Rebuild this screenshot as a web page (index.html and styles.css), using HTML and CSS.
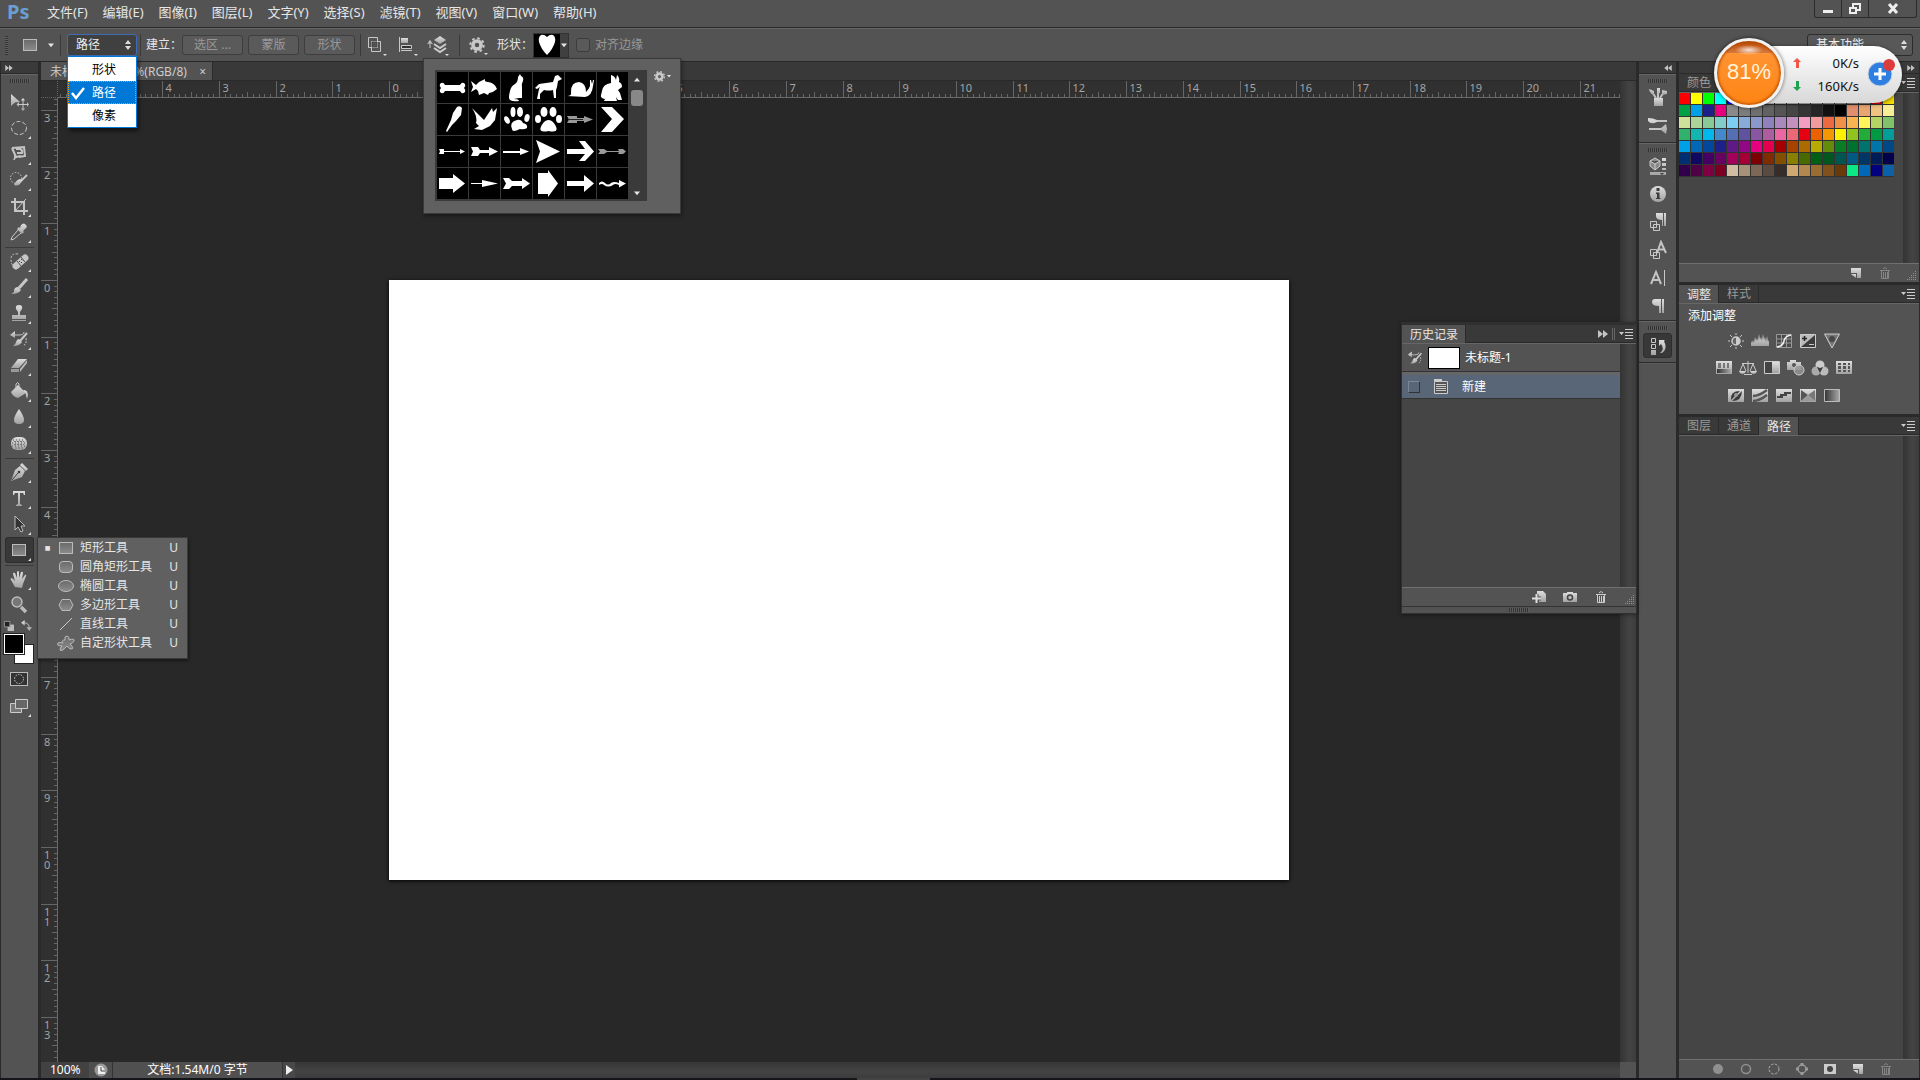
FILE: index.html
```html
<!DOCTYPE html>
<html lang="zh-CN">
<head>
<meta charset="utf-8">
<title>Photoshop</title>
<link rel="stylesheet" href="styles.css">
</head>
<body>
<svg class="sprite" aria-hidden="true">
  <defs>
    <linearGradient id="metal" x1="0" y1="0" x2="0" y2="1"><stop offset="0" stop-color="#dedede"/><stop offset="1" stop-color="#a2a2a2"/></linearGradient>
    <linearGradient id="dull" x1="0" y1="0" x2="0" y2="1"><stop offset="0" stop-color="#6a6a6a"/><stop offset="1" stop-color="#8c8c8c"/></linearGradient>
    <linearGradient id="fade" x1="0" y1="0" x2="1" y2="0"><stop offset="0" stop-color="#333"/><stop offset="1" stop-color="#aaa"/></linearGradient>
  </defs>
  <symbol id="move" viewBox="0 0 20 20"><path class="f" d="M2 2l9 8-5 .5L2 14z"/><path class="s" d="M14 8v9M9.500 12.500h9"/><path class="f" d="M14 6l2.200 2.500h-4.400zM14 19l2.200-2.500h-4.400zM7.500 12.500l2.500-2.200v4.400zM20 12.500l-2-2.200v4.400z"/></symbol>
  <symbol id="ellsel" viewBox="0 0 20 20"><ellipse class="s" cx="10" cy="10" rx="7.500" ry="6.500" stroke-dasharray="4 2"/></symbol>
  <symbol id="lasso" viewBox="0 0 20 20"><path class="s2" d="M3 4l12-1 1 9-6 1M3 4l4 9 5-1"/><path class="s" d="M7 13l-2 3 1-6"/><path class="s2" d="M7 5h4q3 1 2 4H8"/></symbol>
  <symbol id="quick" viewBox="0 0 20 20"><circle class="s" cx="7" cy="8" r="5.500" stroke-dasharray="1.500 1.500"/><path class="s2" d="M18 5l-6 6"/><path class="f" d="M13 10l-2-1q-4 1-6 6 5 2 8-4z"/></symbol>
  <symbol id="crop" viewBox="0 0 20 20"><path class="s2" d="M2 6h13v13M6 2v13h13"/><path class="s" d="M17 3L6 15"/></symbol>
  <symbol id="dropper" viewBox="0 0 20 20"><path class="f" d="M12 3q3-3 5 0 2 2-1 4l-2 2 1 1-2 2-5-5 2-2 1 1z"/><path class="s" d="M9 8l-6 7-1 3 3-1 7-6"/></symbol>
  <symbol id="heal" viewBox="0 0 20 20"><path class="s" d="M9 3q-7-1-7 5t3 7" stroke-dasharray="2 1.500"/><path d="M7 15l9-8" stroke="#c6c6c6" stroke-width="7" stroke-linecap="round"/><path class="d" d="M10 10h1v1h-1zM12 11h1v1h-1zM12 8h1v1h-1zM14 9h1v1h-1z"/><path d="M8 10l4 5M12 6l4 5" stroke="#555"/></symbol>
  <symbol id="brush" viewBox="0 0 20 20"><path d="M18 2L10 11" stroke="#c8c8c8" stroke-width="3"/><path class="f" d="M9 10l3 3q-2 4-10 4 4-2 3-4 1-3 4-3z"/></symbol>
  <symbol id="stamp" viewBox="0 0 20 20"><path class="f" d="M10 2q4 0 3 4l-2 3v3h6v4H3v-4h6V9L7 6q-1-4 3-4zM3 17h14v1H3z"/></symbol>
  <symbol id="hist" viewBox="0 0 20 20"><path class="s" d="M3 6h7q5 0 5-3"/><path class="f" d="M1 6l5-4v7z"/><path d="M18 4l-7 8" stroke="#c8c8c8" stroke-width="2"/><path class="f" d="M10 10l3 3q-2 4-9 4 3-2 3-4 1-3 3-3z"/><path class="s" d="M17 9q1 6-3 8" stroke-dasharray="2 1"/></symbol>
  <symbol id="eraser" viewBox="0 0 20 20"><path class="f" d="M9 4h9l-8 9H2z"/><path fill="#999" d="M2 14h8v3H2z"/><path fill="#bbb" d="M18 5v3l-7 9v-3z"/></symbol>
  <symbol id="bucket" viewBox="0 0 20 20"><path class="f" d="M9 4l8 8-8 5q-5-1-7-6z"/><path class="s" d="M7 9V3q2-3 3 0v5"/><path class="f" d="M15 9q4 0 4 6l-1 3-1-3q0-4-3-5z"/></symbol>
  <symbol id="drop" viewBox="0 0 20 20"><path class="f" d="M10 2q5 7 5 11 0 4-5 4t-5-4q0-4 5-11z"/></symbol>
  <symbol id="sponge" viewBox="0 0 20 20"><rect class="f" x="2" y="4" width="16" height="13" rx="6"/><path d="M4 7h12M3 10h14M3 13h14" stroke="#555" stroke-dasharray="1 2"/><path d="M5 8.500h10M5 11.500h10M6 15h8" stroke="#777" stroke-dasharray="2 1"/></symbol>
  <symbol id="pen" viewBox="0 0 20 20"><path class="f" d="M13 1l6 6-2 2-6-6zM11 4l5 5-3 6-11 4 4-11z"/><path class="k" d="M3 18l6-7"/><circle class="d" cx="10" cy="10" r="1.300"/></symbol>
  <symbol id="type" viewBox="0 0 20 20"><path class="f" d="M4 3h12v4h-1l-1-2h-3v11l2 1v1H7v-1l2-1V5H6L5 7H4z"/></symbol>
  <symbol id="select" viewBox="0 0 20 20"><path d="M6 2v14l3-3 3 5 2-1-2-5h4z" fill="#333" stroke="#bbb"/></symbol>
  <symbol id="rect" viewBox="0 0 20 20"><rect x="3.500" y="4.500" width="13" height="11" fill="url(#dull)" stroke="#bbb"/></symbol>
  <symbol id="rrect" viewBox="0 0 20 20"><rect x="3.500" y="4.500" width="13" height="11" rx="3.500" fill="url(#dull)" stroke="#bbb"/></symbol>
  <symbol id="ellipse" viewBox="0 0 20 20"><ellipse cx="10" cy="10" rx="7.500" ry="5.500" fill="url(#dull)" stroke="#bbb"/></symbol>
  <symbol id="poly" viewBox="0 0 20 20"><path d="M6 4.500h8l3 5.500-3 5.500H6L3 10z" fill="url(#dull)" stroke="#bbb"/></symbol>
  <symbol id="line" viewBox="0 0 20 20"><path class="s" d="M4 16L16 4"/></symbol>
  <symbol id="blob" viewBox="0 0 20 20"><path d="M9 7q-1-4 2-4 3 1 2 4 6-2 5 1-1 2-4 3 5 5 1 5-2 0-4-3-5 6-7 4 0-2 2-4-6 0-4-3 2-1 5 0-2-3 2-3z" fill="url(#dull)" stroke="#bbb"/></symbol>
  <symbol id="hand" viewBox="0 0 20 20"><path class="f" d="M6 18L2 11q-1-2 1-2l3 3L4 5q0-2 2-1l2 5V3q1-2 2 0v6l2-6q2-1 2 1l-1 6 3-4q2-1 1 1l-3 8-1 4z"/></symbol>
  <symbol id="zoom" viewBox="0 0 20 20"><circle cx="8" cy="7" r="5" fill="#777" stroke="#bbb" stroke-width="1.500"/><path d="M12 12l5 5" stroke="#bbb" stroke-width="3.500"/></symbol>
  <symbol id="mini" viewBox="0 0 12 12"><path fill="#bbb" d="M5 5h7v7H5z"/><path d="M1.500 1.500h6v6h-6z" fill="#222" stroke="#999"/></symbol>
  <symbol id="swap" viewBox="0 0 12 12"><path class="s" d="M3 3q6 0 6 6"/><path class="f" d="M0 3l4-3v6zM9 12L6 8h6z"/></symbol>
  <symbol id="mask" viewBox="0 0 20 20"><rect x="1.500" y="3.500" width="17" height="13" fill="#333" stroke="#bbb"/><circle class="s" cx="10" cy="10" r="4.500" stroke-dasharray="1.500 1.300"/></symbol>
  <symbol id="screen" viewBox="0 0 20 20"><path d="M1.500 7.500h11v9h-11z" fill="#777" stroke="#ccc"/><path d="M6.500 3.500h12v9h-12z" fill="#666" stroke="#ccc"/></symbol>
  <symbol id="combine" viewBox="0 0 20 20"><path class="s" d="M3.500 2.500h9v10h-9z"/><path class="s" d="M6.500 6.500h9v10h-9z"/><path class="k" d="M7 7h5v5H7z"/></symbol>
  <symbol id="align" viewBox="0 0 20 20"><path class="s" d="M3.500 2v15M5 15.500h11"/><path class="f" d="M5 3h7v5H5z"/><path d="M5.500 10.500h10v3h-10z" fill="#333" stroke="#ccc"/></symbol>
  <symbol id="stack" viewBox="0 0 20 20"><path class="f" d="M13 1l6 4-6 4-6-4z"/><path d="M7 9l6 4 6-4M7 13l6 4 6-4" fill="none" stroke="#ccc" stroke-width="2"/><path class="s" d="M3 13V7"/><path class="f" d="M0 9l3-4 3 4z"/></symbol>
  <symbol id="gear" viewBox="0 0 20 20"><circle cx="10" cy="10" r="4.500" fill="none" stroke="#c8c8c8" stroke-width="4"/><circle cx="10" cy="10" r="7.500" fill="none" stroke="#c8c8c8" stroke-width="2.200" stroke-dasharray="2.900 3"/></symbol>
  <symbol id="down" viewBox="0 0 8 8"><path fill="#e4e4e4" d="M0 2h8L4 7z"/></symbol>
  <symbol id="updown" viewBox="0 0 8 12"><path fill="#ddd" d="M1 5h6L4 1zM1 7h6l-3 4z"/></symbol>
  <symbol id="ff" viewBox="0 0 10 8"><path fill="#c4c4c4" d="M0 0l5 4-5 4zM5 0l5 4-5 4z"/></symbol>
  <symbol id="rew" viewBox="0 0 10 8"><path fill="#c4c4c4" d="M5 0L0 4l5 4zM10 0L5 4l5 4z"/></symbol>
  <symbol id="menu" viewBox="0 0 14 10"><path fill="#ccc" d="M0 3h5L2.500 6zM6 0h8v1H6zM6 3h8v1H6zM6 6h8v1H6zM6 9h8v1H6z"/></symbol>
  <symbol id="new" viewBox="0 0 14 14"><path class="f" d="M2 2h10v10H8V7H2z"/><path class="f" d="M2 8h5v4z"/></symbol>
  <symbol id="trash" viewBox="0 0 14 14"><path d="M2 4.500h10M5 3q2-3 4 0M3.500 5v7.500h7V5M5.500 6v6M7.500 6v6M9.500 6v6" fill="none" stroke="currentColor"/></symbol>
  <symbol id="camera" viewBox="0 0 14 14"><path class="f" d="M0 3h4V2h6v1h4v9H0z"/><circle cx="7" cy="7.500" r="2.500" fill="#bbb" stroke="#444" stroke-width="1.500"/></symbol>
  <symbol id="newdoc" viewBox="0 0 14 14"><path class="f" d="M5 1h6l3 3v8H7V8H5z"/><path d="M4.500 4v9M0 8.500h9" stroke="#555" stroke-width="4"/><path d="M4.500 4v9M0 8.500h9" stroke="#ddd" stroke-width="2"/></symbol>
  <symbol id="resize" viewBox="0 0 10 10"><path fill="#909090" d="M8 0h1v1H8zM6 2h1v1H6zM8 2h1v1H8zM4 4h1v1H4zM6 4h1v1H6zM8 4h1v1H8zM2 6h1v1H2zM4 6h1v1H4zM6 6h1v1H6zM8 6h1v1H8zM0 8h1v1H0zM2 8h1v1H2zM4 8h1v1H4zM6 8h1v1H6zM8 8h1v1H8z"/></symbol>
  <symbol id="cup" viewBox="0 0 20 20"><path class="f" d="M6 11h9v8H6z"/><path class="s2" d="M8 11L4 5M10 11V4M12 11l4-6"/><path class="f" d="M1 2l5 2v4q-4-1-5-6zM9 1h3v5H9zM14 3l5 1v3l-5 1z"/></symbol>
  <symbol id="presets" viewBox="0 0 20 20"><path class="s2" d="M8 6h11M1 14h12"/><path class="f" d="M0 3q5 0 9 2v2q-6 3-9-1zM13 13l5-4 1 5-1 5-5-4z"/></symbol>
  <symbol id="cube" viewBox="0 0 20 20"><path d="M7 2l5 3v5l-5 4-5-4V5zM2 5l5 3 5-3M7 8v6" fill="#888" stroke="#ccc"/><path class="f" d="M14 2h4v3h-4zM14 7h4v3h-4zM14 12h4v2h-4zM2 16h16v3H2z"/><path class="d" d="M12 17h4l-2 2z"/></symbol>
  <symbol id="info" viewBox="0 0 20 20"><circle class="f" cx="10" cy="10" r="8"/><path class="d" d="M8.500 4h3v3h-3zM8 8.500h3.500V14h1v1H8v-1h1v-4H8z"/></symbol>
  <symbol id="pstyle" viewBox="0 0 20 20"><path class="f" d="M16 1h2v13h-2zM8 1h7v13h-1V8q-6 0-6-4z"/><path class="s" d="M2.500 9.500h6v6h-6zM5.500 12.500h6v6h-6z"/></symbol>
  <symbol id="cstyle" viewBox="0 0 20 20"><path class="s2" d="M9 13l4-11 5 11M10.500 9.500h6"/><path class="s" d="M2.500 9.500h6v6h-6zM5.500 12.500h6v6h-6z"/></symbol>
  <symbol id="char" viewBox="0 0 20 20"><path class="s2" d="M3 16L8 4l5 12M5 12h6"/><path class="s" d="M16.500 2v16"/></symbol>
  <symbol id="para" viewBox="0 0 20 20"><path class="f" d="M14 3h2v14h-2zM7 3h6v14h-2v-7q-7 0-7-4 0-3 3-3z"/></symbol>
  <symbol id="histpan" viewBox="0 0 20 20"><path class="s" d="M3.500 2.500h4v4h-4zM3.500 8.500h4v4h-4z"/><path class="f" d="M3 14h5v5H3zM11 4h6l-1 1q4 8-2 12-1 0-2 0 5-4 1-9l-2 2z"/></symbol>
  <symbol id="a1" viewBox="0 0 18 16"><circle cx="9" cy="8" r="4" fill="#666" stroke="#ccc" stroke-width="1.500"/><path fill="#ccc" d="M9 4a4 4 0 010 8z"/><path class="s" d="M9 0v2M9 14v2M1 8h2M15 8h2M3 2l2 2M13 12l2 2M3 14l2-2M13 4l2-2"/></symbol>
  <symbol id="a2" viewBox="0 0 18 16"><path class="f" d="M0 13V8l1 2 1-3 1 3 1-6 1 4 1-3 1 3 1-7 1 6 1-3 1 4 1-7 1 6 1-3 1 5 1-6 1 6 1-2v6z"/></symbol>
  <symbol id="a3" viewBox="0 0 18 16"><path d="M1.500 1.500h15v13h-15zM6.500 1v13M11.500 1v13M1 6h15M1 10h15" stroke="#999" fill="#4a4a4a"/><path d="M2 14Q8 13 9 8t7-6" stroke="#eee" stroke-width="1.500" fill="none"/></symbol>
  <symbol id="a4" viewBox="0 0 18 16"><path d="M1.500 1.500h15v13h-15z" fill="#bbb" stroke="#ccc"/><path class="d" d="M2 14L16 2v12z"/><path d="M5.500 3v5M3 5.500h5" stroke="#222" stroke-width="1.500"/><path class="s" d="M10 11.500h5"/></symbol>
  <symbol id="a5" viewBox="0 0 18 16"><path d="M1.500 1h15L9 15z" fill="#777" stroke="#ccc"/><circle cx="9" cy="6" r="3" fill="#484848"/></symbol>
  <symbol id="b1" viewBox="0 0 18 16"><path class="f" d="M1 1h16v13H1z"/><path fill="url(#fade)" d="M2 9h14v4H2z"/><path fill="#777" d="M3 3h3v5H3zM8 3h2v5H8zM12 3h2v5h-2z"/></symbol>
  <symbol id="b2" viewBox="0 0 18 16"><path class="s" d="M9 1v12M3 3.500h12M5 14.500h8M4 4l-3 7M4 4l3 7M14 4l-3 7M14 4l3 7"/><path class="f" d="M0 11h7q-1 3-3.500 3T0 11zM11 11h7q-1 3-3.500 3T11 11z"/></symbol>
  <symbol id="b3" viewBox="0 0 18 16"><path d="M1.500 1.500h15v12h-15z" fill="#444" stroke="#ccc"/><path class="f" d="M9 2h7v11H9z"/></symbol>
  <symbol id="b4" viewBox="0 0 18 16"><path class="f" d="M0 2h3V0h6v2h5v8H0z"/><circle cx="7" cy="5" r="2" fill="#555"/><circle cx="12" cy="10" r="5" fill="#999" fill-opacity=".8" stroke="#ccc"/></symbol>
  <symbol id="b5" viewBox="0 0 18 16"><circle cx="9" cy="5" r="4.500" fill="#ccc"/><circle cx="5" cy="11" r="4.500" fill="#aaa"/><circle cx="13" cy="11" r="4.500" fill="#bbb"/><path class="d" d="M6 7l3 1 3-1-3 6z"/></symbol>
  <symbol id="b6" viewBox="0 0 18 16"><path class="f" d="M1 1h16v13H1z"/><path fill="#555" d="M3 3h3v2H3zM8 3h3v2H8zM13 3h2v2h-2zM3 6h3v3H3zM8 6h3v3H8zM13 6h2v3h-2zM3 10h3v2H3zM8 10h3v2H8zM13 10h2v2h-2z"/></symbol>
  <symbol id="c1" viewBox="0 0 18 16"><path class="f" d="M1 2h16v13H1z"/><path class="d" d="M4 13q-1-9 9-9L4 13zM5 14L15 4q0 10-10 10z"/><circle cx="9" cy="8" r="2" fill="#999"/></symbol>
  <symbol id="c2" viewBox="0 0 18 16"><path class="f" d="M1 2h16v13H1z"/><path d="M2 9q6 0 14-6M2 14q6 0 14-6" stroke="#555" stroke-width="2.500" fill="none"/></symbol>
  <symbol id="c3" viewBox="0 0 18 16"><path class="f" d="M1 2h16v13H1z"/><path fill="#444" d="M2 9h3V7h4V5h7v2h-4v2H8v2H2z"/></symbol>
  <symbol id="c4" viewBox="0 0 18 16"><path class="f" d="M1 2h16v13H1z"/><path fill="#555" d="M2 3l7 5-7 6z"/><path fill="#777" d="M16 3L9 8l7 6z"/><path fill="#999" d="M2 14l7-6 7 6z"/></symbol>
  <symbol id="c5" viewBox="0 0 18 16"><path d="M1.500 2.500h15v12h-15z" fill="url(#fade)" stroke="#bbb"/></symbol>
</svg>

<header class="menubar">
  <span class="logo">Ps</span>
  <nav class="menus"><button>文件(F)</button><button>编辑(E)</button><button>图像(I)</button><button>图层(L)</button><button>文字(Y)</button><button>选择(S)</button><button>滤镜(T)</button><button>视图(V)</button><button>窗口(W)</button><button>帮助(H)</button></nav>
  <div class="winbtns">
    <button aria-label="最小化"><svg width="12" height="12" viewBox="0 0 12 12"><path fill="#eee" d="M1 7h10v3H1z"/></svg></button>
    <button aria-label="还原"><svg width="12" height="12" viewBox="0 0 12 12"><path d="M4 4V1h7v6H8M1 5h6v5H1z" fill="none" stroke="#eee" stroke-width="2"/></svg></button>
    <button aria-label="关闭" class="wide"><svg width="12" height="12" viewBox="0 0 12 12"><path d="M2 1l8 9M10 1l-8 9" stroke="#eee" stroke-width="3"/></svg></button>
  </div>
</header>

<section class="options">
  <i class="grip-v"></i>
  <button class="ico shape-preset" aria-label="矩形工具"><svg width="20" height="20"><use href="#rect"/></svg><svg width="6" height="6"><use href="#down"/></svg></button>
  <i class="vsep"></i>
  <div class="mode">
    <select class="sel" aria-label="工具模式"><option>路径</option></select>
    <svg class="selarrow" width="8" height="12"><use href="#updown"/></svg>
    <div class="modelist" role="listbox">
      <button role="option">形状</button>
      <button role="option" class="on"><svg width="14" height="14" viewBox="0 0 14 14"><path d="M1 7l4 5 8-10" fill="none" stroke="#fff" stroke-width="2.500"/></svg>路径</button>
      <button role="option">像素</button>
    </div>
  </div>
  <i class="vsep"></i>
  <span class="lbl">建立：</span>
  <div class="makes"><button class="btn btn-wide" disabled>选区 ...</button><button class="btn" disabled>蒙版</button><button class="btn" disabled>形状</button></div>
  <i class="vsep"></i>
  <div class="ops">
    <button class="ico flag" aria-label="路径操作"><svg width="20" height="20"><use href="#combine"/></svg></button>
    <button class="ico flag" aria-label="路径对齐方式"><svg width="20" height="20"><use href="#align"/></svg></button>
    <button class="ico flag" aria-label="路径排列方式"><svg width="20" height="20"><use href="#stack"/></svg></button>
  </div>
  <i class="vsep"></i>
  <button class="ico flag gearbtn" aria-label="设置"><svg width="18" height="18"><use href="#gear"/></svg></button>
  <span class="lbl">形状：</span>
  <div class="heartwrap">
    <button class="heart" aria-label="形状"><svg width="26" height="22" viewBox="0 0 26 22"><path fill="#fff" d="M13 3q3-3 6-2 3 2 2 7-2 7-8 13Q7 15 5 8 4 3 7 1q3-1 6 2z"/></svg><span class="heartdrop"><svg width="6" height="6"><use href="#down"/></svg></span></button>
    <div class="picker">
      <div class="pickbox">
        <div class="shapes">
          <button><svg viewBox="0 0 31 31"><path d="M3 12q3-3 5 1h15q2-4 5-1 1 2-1 4 2 2 1 4-3 3-5-1H8q-2 4-5 1-1-2 1-4-2-2-1-4z"/></svg></button>
          <button><svg viewBox="0 0 31 31"><path d="M2 9l5 4 3-3 6-3q-1 3 3 3 7 1 9 7-3 3-8 4l-1 2-4-2-5 2-1-4-2-2-5 3 2-5z"/></svg></button>
          <button><svg viewBox="0 0 31 31"><path d="M17 5l2-3 1 2q3 1 2 5-2 3-1 7v10h-3l-5 1q5 0 5 2-6 1-9-1-2-2 0-9 1-5 5-7 3-2 3-7z"/></svg></button>
          <button><svg viewBox="0 0 31 31"><path d="M29 7l-4 2-1 6-1 3v8h-2l-1-8q-4 1-9 0l-4 4v5H4l2-10 1-2-3 2-2-1 4-4 14-2 2-6 3-1z"/></svg></button>
          <button><svg viewBox="0 0 31 31"><path d="M2 24q5 0 4-4 0-10 8-10 7 1 7 10 3-3 4-6V8h1l1 4 1-4h1l-1 6q-1 10-8 11z"/></svg></button>
          <button><svg viewBox="0 0 31 31"><path d="M14 3q4 1 5 5l1-5q3 3 2 7 3 1 3 5l-4 3 2 3 2 7h-4l-2-3 1 4H7l1-2q-5-1-4-4l1-4q1-7 9-8 0-4 0-8z"/></svg></button>
          <button><svg viewBox="0 0 31 31"><path d="M20 3q3-2 5 1l-1 7-5 6-4 4-5 7-1-1 5-11 2-7z"/></svg></button>
          <button><svg viewBox="0 0 31 31"><path d="M3 4l12 12 8-12 1 4 4-4-2 12-5 6-8 4-8-1 5-3-3-3q2-6-4-15z"/></svg></button>
          <button><svg viewBox="0 0 31 31"><ellipse cx="12" cy="8" rx="2.500" ry="5"/><ellipse cx="19" cy="8" rx="3" ry="5"/><ellipse cx="6" cy="16" rx="2.500" ry="4" transform="rotate(-25 6 16)"/><ellipse cx="26" cy="14" rx="2.500" ry="4" transform="rotate(15 26 14)"/><path d="M16 16q4-1 6 3 5 1 4 5-3 2-7 1-8 4-8 0-3-7 5-9z"/></svg></button>
          <button><svg viewBox="0 0 31 31"><ellipse cx="11" cy="8" rx="3.500" ry="5"/><ellipse cx="20" cy="8" rx="3.500" ry="5"/><ellipse cx="5" cy="15" rx="3" ry="4"/><ellipse cx="26" cy="15" rx="3" ry="4"/><path d="M15.500 16q5 0 8 8 1 5-8 3-9 2-8-3 3-8 8-8z"/></svg></button>
          <button><svg viewBox="0 0 31 31"><path fill="#999" d="M2 12h10v2h7v-2l9 3.500-9 3.500v-2h-7v2H2l2-3.500z"/><path stroke="#222" d="M3 15.500h15"/></svg></button>
          <button><svg viewBox="0 0 31 31"><path d="M4 3h11l12 12-12 13H4l11-13z"/></svg></button>
          <button><svg viewBox="0 0 31 31"><path d="M2 13h5v2h16v-2l5 2.500-5 2.500v-2H7v2H2l1-2.500z"/></svg></button>
          <button><svg viewBox="0 0 31 31"><path d="M2 11h7l2 3h9v-3l9 4.500-9 4.500v-3h-9l-2 3H2l2-4.500z"/></svg></button>
          <button><svg viewBox="0 0 31 31"><path d="M2 15h17v-3l9 3.500-9 3.500v-2H2z"/></svg></button>
          <button><svg viewBox="0 0 31 31"><path d="M3 4l24 11.500L3 27l4-11.500z"/></svg></button>
          <button><svg viewBox="0 0 31 31"><path d="M2 13h18l-6-8h6l9 10.500L20 25h-6l6-7H2z"/></svg></button>
          <button><svg viewBox="0 0 31 31"><path fill="#999" d="M1 13h6l3 2h12l-1-2h5l3 2.500-3 2.500h-5l1-2H10l-3 2H1l2-2.500z"/></svg></button>
          <button><svg viewBox="0 0 31 31"><path d="M2 10h14V6l12 9.500L16 25v-4H2z"/></svg></button>
          <button><svg viewBox="0 0 31 31"><path d="M2 15h11v-3l16 3.500L13 19v-3H2z"/></svg></button>
          <button><svg viewBox="0 0 31 31"><path d="M2 10h6l3 3h10v-3l8 5.500-8 5.500v-3H11l-3 3H2l3-5.500z"/></svg></button>
          <button><svg viewBox="0 0 31 31"><path d="M5 5h10V2l10 13.500L15 29v-3H5z"/></svg></button>
          <button><svg viewBox="0 0 31 31"><path d="M2 13h17V7l10 8.500L19 24v-6H2z"/></svg></button>
          <button><svg viewBox="0 0 31 31"><path d="M2 15q3-3 6 0 3 3 6 0 3-2 8 0v-3l7 3.500-7 4V17q-4-2-6 0-5 3-9 0-2-2-5 0z"/></svg></button>
        </div>
        <div class="pickscroll"><svg width="6" height="6" class="flip"><use href="#down"/></svg><i></i><svg width="6" height="6"><use href="#down"/></svg></div>
      </div>
      <button class="ico pickgear" aria-label="选项"><svg width="13" height="13"><use href="#gear"/></svg><svg width="4" height="6"><use href="#down"/></svg></button>
    </div>
  </div>
  <label class="edges"><input type="checkbox" disabled>对齐边缘</label>
  <div class="workspace-sel"><select class="sel" aria-label="工作区"><option>基本功能</option></select><svg class="selarrow" width="8" height="12"><use href="#updown"/></svg></div>
</section>

<main class="workspace">
  <aside class="tools">
    <div class="colhead"><svg width="8" height="6"><use href="#ff"/></svg></div>
    <div class="toolbody">
      <i class="grip"></i>
      <div class="toolgroup first">
        <button><svg><use href="#move"/></svg></button><button class="more"><svg><use href="#ellsel"/></svg></button><button class="more"><svg><use href="#lasso"/></svg></button><button class="more"><svg><use href="#quick"/></svg></button><button class="more"><svg><use href="#crop"/></svg></button><button class="more"><svg><use href="#dropper"/></svg></button>
      </div>
      <div class="toolgroup">
        <button class="more"><svg><use href="#heal"/></svg></button><button class="more"><svg><use href="#brush"/></svg></button><button class="more"><svg><use href="#stamp"/></svg></button><button class="more"><svg><use href="#hist"/></svg></button><button class="more"><svg><use href="#eraser"/></svg></button><button class="more"><svg><use href="#bucket"/></svg></button><button class="more"><svg><use href="#drop"/></svg></button><button class="more"><svg><use href="#sponge"/></svg></button>
      </div>
      <div class="toolgroup">
        <button class="more"><svg><use href="#pen"/></svg></button><button class="more"><svg><use href="#type"/></svg></button><button class="more"><svg><use href="#select"/></svg></button>
        <div class="current">
          <button class="more active"><svg><use href="#rect"/></svg></button>
          <div class="flyout">
            <button><b>■</b><svg><use href="#rect"/></svg><span>矩形工具</span><kbd>U</kbd></button>
            <button><b></b><svg><use href="#rrect"/></svg><span>圆角矩形工具</span><kbd>U</kbd></button>
            <button><b></b><svg><use href="#ellipse"/></svg><span>椭圆工具</span><kbd>U</kbd></button>
            <button><b></b><svg><use href="#poly"/></svg><span>多边形工具</span><kbd>U</kbd></button>
            <button><b></b><svg><use href="#line"/></svg><span>直线工具</span><kbd>U</kbd></button>
            <button><b></b><svg><use href="#blob"/></svg><span>自定形状工具</span><kbd>U</kbd></button>
          </div>
        </div>
      </div>
      <div class="toolgroup open">
        <button class="more"><svg><use href="#hand"/></svg></button><button><svg><use href="#zoom"/></svg></button>
      </div>
      <div class="swaprow"><svg><use href="#mini"/></svg><svg><use href="#swap"/></svg></div>
      <div class="fgbg"><i class="bg"></i><i class="fg"></i></div>
      <div class="viewmodes"><button><svg><use href="#mask"/></svg></button><button class="more"><svg><use href="#screen"/></svg></button></div>
    </div>
  </aside>

  <section class="doc">
    <div class="tabs doctabs"><button class="doctab"><span>未标题-1 @ 100%(RGB/8)</span><span>×</span></button></div>
    <div class="view">
      <div class="corner"></div>
      <svg class="hruler" id="hruler"></svg>
      <svg class="vruler" id="vruler"></svg>
      <div class="stage"><div class="canvas"></div></div>
      <div class="vscroll"></div>
      <div class="status">
        <span class="zoomv">100%</span>
        <span class="sticon"><svg width="14" height="14" viewBox="0 0 14 14"><circle cx="7" cy="7" r="6.500" fill="#999"/><path d="M4 3h4l3 4v4H4z" fill="#eee"/><path d="M7 4v4h4" fill="none" stroke="#444"/></svg></span>
        <span class="docinfo">文档:1.54M/0 字节</span>
        <button class="starrow" aria-label="状态菜单"><svg width="7" height="10" viewBox="0 0 7 10"><path fill="#eee" d="M0 0l7 5-7 5z"/></svg></button>
        <span class="hscroll"></span>
      </div>
      <div class="scorner"></div>
    </div>
  </section>

  <aside class="dock">
    <div class="colhead end"><svg width="8" height="6"><use href="#rew"/></svg></div>
    <div class="dockgroup"><i class="grip"></i><button><svg><use href="#cup"/></svg></button><button><svg><use href="#presets"/></svg></button></div>
    <div class="dockgroup"><i class="grip"></i><button><svg><use href="#cube"/></svg></button><button><svg><use href="#info"/></svg></button><button><svg><use href="#pstyle"/></svg></button><button><svg><use href="#cstyle"/></svg></button><button><svg><use href="#char"/></svg></button><button><svg><use href="#para"/></svg></button></div>
    <div class="dockgroup last"><i class="grip"></i><button class="active"><svg><use href="#histpan"/></svg></button></div>
    <div class="dockfill"></div>

    <section class="history">
      <div class="tabs"><button class="tab on">历史记录</button><span class="tabtools"><svg width="10" height="8"><use href="#ff"/></svg><i></i><svg width="14" height="10"><use href="#menu"/></svg></span></div>
      <div class="histbody">
        <div class="histlist">
          <div class="snap"><svg width="16" height="16"><use href="#hist"/></svg><i></i><span>未标题-1</span></div>
          <div class="state"><i></i><svg width="16" height="16" viewBox="0 0 16 16"><path fill="#ccc" d="M1 0h8v2H1z"/><path d="M1.500 2.500h13v12h-13z" fill="#555" stroke="#ccc"/><path d="M3 5.500h10M3 7.500h10M3 9.500h10M3 11.500h10" stroke="#ccc"/></svg><span>新建</span></div>
        </div>
        <div class="vscroll"></div>
      </div>
      <div class="foot"><svg width="14" height="14"><use href="#newdoc"/></svg><svg width="14" height="14"><use href="#camera"/></svg><svg width="14" height="14" class="lit"><use href="#trash"/></svg><svg width="10" height="10" class="rs"><use href="#resize"/></svg></div>
      <div class="histgrip"><i class="grip"></i></div>
    </section>
  </aside>

  <aside class="panels">
    <div class="colhead end"><svg width="8" height="6"><use href="#ff"/></svg></div>
    <section class="panel colors">
      <div class="tabs"><button class="tab">颜色</button><button class="tab on">色板</button><span class="tabtools"><svg width="14" height="10"><use href="#menu"/></svg></span></div>
      <div class="pbody"><div class="swatches" id="swatches"></div><div class="vscroll"></div></div>
      <div class="foot"><svg width="14" height="14"><use href="#new"/></svg><svg width="14" height="14" class="dim"><use href="#trash"/></svg><svg width="10" height="10" class="rs"><use href="#resize"/></svg></div>
    </section>
    <section class="panel adjust">
      <div class="tabs"><button class="tab on">调整</button><button class="tab">样式</button><span class="tabtools"><svg width="14" height="10"><use href="#menu"/></svg></span></div>
      <div class="adjbody">
        <p>添加调整</p>
        <div class="adjrow"><button><svg><use href="#a1"/></svg></button><button><svg><use href="#a2"/></svg></button><button><svg><use href="#a3"/></svg></button><button><svg><use href="#a4"/></svg></button><button><svg><use href="#a5"/></svg></button></div>
        <div class="adjrow"><button><svg><use href="#b1"/></svg></button><button><svg><use href="#b2"/></svg></button><button><svg><use href="#b3"/></svg></button><button><svg><use href="#b4"/></svg></button><button><svg><use href="#b5"/></svg></button><button><svg><use href="#b6"/></svg></button></div>
        <div class="adjrow"><button><svg><use href="#c1"/></svg></button><button><svg><use href="#c2"/></svg></button><button><svg><use href="#c3"/></svg></button><button><svg><use href="#c4"/></svg></button><button><svg><use href="#c5"/></svg></button></div>
      </div>
    </section>
    <section class="panel paths">
      <div class="tabs"><button class="tab">图层</button><button class="tab">通道</button><button class="tab on">路径</button><span class="tabtools"><svg width="14" height="10"><use href="#menu"/></svg></span></div>
      <div class="pbody"><div class="empty"></div><div class="vscroll"></div></div>
      <div class="foot">
        <svg width="14" height="14" viewBox="0 0 14 14"><circle cx="7" cy="7" r="5" fill="#909090"/></svg>
        <svg width="14" height="14" viewBox="0 0 14 14"><circle cx="7" cy="7" r="4.500" fill="none" stroke="#909090" stroke-width="1.500"/></svg>
        <svg width="14" height="14" viewBox="0 0 14 14"><circle cx="7" cy="7" r="5" fill="none" stroke="#b0b0b0" stroke-dasharray="2.500 1.500"/></svg>
        <svg width="14" height="14" viewBox="0 0 14 14"><circle cx="7" cy="7" r="4" fill="none" stroke="#999" stroke-width="1.500"/><path fill="#999" d="M5.500 1h3v3h-3zM5.500 10h3v3h-3zM1 5.500h3v3H1zM10 5.500h3v3h-3z"/></svg>
        <svg width="14" height="14" viewBox="0 0 14 14"><path fill="#ccc" d="M1 2h12v10H1z"/><circle cx="7" cy="7" r="3" fill="#444"/></svg>
        <svg width="14" height="14"><use href="#new"/></svg>
        <svg width="14" height="14" class="dim"><use href="#trash"/></svg>
      </div>
    </section>
  </aside>
</main>
<footer class="edge"><i></i></footer>

<aside class="netball">
  <div class="ball">81%</div>
  <dl class="rates">
    <dt><svg width="8" height="10" viewBox="0 0 8 10"><path fill="#f05545" d="M0 4l4-4 4 4H6v6H3V4z"/></svg></dt><dd>0K/s</dd>
    <dt><svg width="8" height="10" viewBox="0 0 8 10"><path fill="#20a050" d="M0 6l4 4 4-4H6V0H3v6z"/></svg></dt><dd>160K/s</dd>
  </dl>
  <svg class="plus" width="30" height="30" viewBox="0 0 30 30"><circle cx="13" cy="16" r="12" fill="#2f7fe0" stroke="#c8d4e4"/><path d="M13 10v12M7 16h12" stroke="#fff" stroke-width="3"/><circle cx="22" cy="7" r="6" fill="#dc3c3c"/></svg>
</aside>
<script src="app.js"></script>
</body>
</html>
```
FILE: styles.css
```css
* { box-sizing: border-box; }
body {
  margin: 0; height: 100vh; display: flex; flex-direction: column; overflow: hidden;
  background: #2a2a2a; color: #e6e6e6;
  font: 12px/16px "Noto Sans", "Noto Sans CJK SC", sans-serif;
}
button { font: inherit; color: inherit; background: none; border: 0; padding: 0; margin: 0; }
svg { display: block; flex: none; }
.sprite { position: absolute; width: 0; height: 0; }
.f { fill: url(#metal); }
.s { fill: none; stroke: #c8c8c8; stroke-width: 1; }
.s2 { fill: none; stroke: #c4c4c4; stroke-width: 2; }
.d { fill: #3c3c3c; }
.k { fill: none; stroke: #444; }

/* menu bar */
.menubar { height: 28px; flex: none; display: flex; background: #535353; border-bottom: 1px solid #282828; }
.logo { width: 39px; padding-left: 7px; font: bold 20px/24px "Noto Sans", sans-serif; color: #6b9fd4; }
.menus { flex: 1; display: flex; gap: 15px; align-items: center; padding: 0 0 3px 8px; font-size: 13px; }
.winbtns { display: flex; height: 18px; margin-right: 3px; border: 1px solid #2c2c2c; border-top: 0; border-radius: 0 0 3px 3px; }
.winbtns button { width: 27px; display: flex; align-items: center; justify-content: center; border-right: 1px solid #2c2c2c; }
.winbtns .wide { width: 47px; border-right: 0; }

/* options bar */
.options { height: 34px; flex: none; display: flex; align-items: center; padding: 0 7px 0 5px; background: #535353; border-top: 1px solid #666; border-bottom: 1px solid #282828; }
.grip-v { width: 3px; height: 19px; background: repeating-linear-gradient(#333 0 1px, #606060 1px 2px); }
.ico { display: flex; align-items: center; position: relative; }
.shape-preset { margin-left: 12px; gap: 8px; width: 40px; }
.vsep { width: 1px; height: 22px; background: #3a3a3a; flex: none; }
.sel { appearance: none; width: 100%; height: 22px; padding: 0 8px; font: inherit; color: #eee; background: #404040; border: 1px solid #2c2c2c; border-radius: 3px; outline: 0; }
.selarrow { position: absolute; right: 5px; top: 5px; pointer-events: none; }
.mode { position: relative; width: 70px; margin: 0 3px 0 6px; }
.mode .sel { border-color: #3d6cb4; }
.modelist { position: absolute; z-index: 20; left: 0; top: 22px; width: 70px; display: flex; flex-direction: column; padding-top: 1px; background: #fff; border: 1px solid #0078d7; box-shadow: 2px 3px 4px #0008; color: #000; }
.modelist button { height: 23px; padding-left: 4px; position: relative; }
.modelist .on { background: #0078d7; color: #fff; outline: 1px dotted #f90; outline-offset: -1px; }
.modelist svg { position: absolute; left: 3px; top: 5px; }
.lbl { margin-left: 5px; width: 36px; white-space: nowrap; }
.makes { display: flex; gap: 5px; margin-right: 5px; }
.btn { width: 51px; height: 20px; line-height: 18px; color: #999; background: #5a5a5a; border: 1px solid #3e3e3e; border-radius: 3px; }
.btn-wide { width: 61px; }
.ops { display: flex; gap: 11px; padding: 0 12px 0 4px; }
.flag::after { content: ""; position: absolute; right: -2px; bottom: -1px; border: 2px solid transparent; border-top-color: #ddd; border-bottom: 0; }
.gearbtn { margin: 0 6px 0 8px; }
.heartwrap { position: relative; }
.heart { display: flex; align-items: center; width: 36px; height: 25px; background: #000; border: 1px solid #333; }
.heartdrop { width: 9px; height: 23px; display: flex; align-items: center; justify-content: center; background: #404040; }
.edges { display: flex; align-items: center; gap: 5px; margin-left: 7px; color: #999; }
.edges input { appearance: none; width: 14px; height: 14px; margin: 0; border: 1px solid #3c3c3c; border-radius: 3px; background: #5a5a5a; }
.workspace-sel { position: relative; width: 106px; margin-left: auto; }
.workspace-sel .sel { background: #585858; }

/* shape picker */
.picker { position: absolute; z-index: 10; left: -110px; top: 25px; width: 258px; height: 156px; display: flex; align-items: flex-start; gap: 6px; padding: 11px; background: #606060; border: 1px solid #3a3a3a; box-shadow: 1px 2px 4px #0006; }
.pickbox { display: flex; border: 2px solid #3a3a3a; background: #3a3a3a; }
.shapes { display: grid; grid-template-columns: repeat(6, 31px); grid-auto-rows: 31px; gap: 1px; }
.shapes button { background: #000; }
.shapes svg { width: 31px; height: 31px; fill: #fff; }
.pickscroll { width: 17px; display: flex; flex-direction: column; align-items: center; padding: 5px 0 3px; }
.pickscroll i { width: 12px; height: 16px; margin: 7px 0 auto; border-radius: 3px; background: #888; }
.flip { transform: rotate(180deg); }
.pickgear { gap: 1px; }

/* work area */
.workspace { flex: 1; min-height: 0; display: flex; gap: 3px; padding: 0 1px; }
.colhead { height: 12px; flex: none; display: flex; align-items: center; padding: 0 4px; background: #3a3a3a; border-bottom: 1px solid #2a2a2a; }
.end { justify-content: flex-end; }
.grip { display: block; width: 20px; height: 4px; margin: 0 auto; background: repeating-linear-gradient(90deg, #333 0 1px, #5c5c5c 1px 2px); }
.tools { width: 37px; flex: none; display: flex; flex-direction: column; }
.toolbody { flex: 1; background: #535353; border-top: 1px solid #666; padding-top: 4px; }
.toolgroup { display: flex; flex-direction: column; margin: 0 4px; padding-bottom: 2px; border-bottom: 1px solid #3a3a3a; }
.toolgroup.first { padding-top: 6px; }
.toolgroup.open { padding-bottom: 0; border: 0; }
.toolbody button { height: 26px; width: 29px; padding-left: 4px; position: relative; display: flex; align-items: center; }
.toolbody svg { width: 20px; height: 20px; }
.more::after { content: ""; position: absolute; right: 3px; bottom: 2px; border: solid; border-width: 0 0 3px 3px; border-color: transparent transparent #ddd transparent; }
.toolbody .active { background: #383838; border-radius: 3px; outline: 1px solid #2e2e2e; outline-offset: -1px; }
.current { position: relative; }
.flyout { position: absolute; z-index: 8; left: 32px; top: 0; width: 151px; height: 122px; padding: 0 0 2px; background: #606060; border: 1px solid #3a3a3a; box-shadow: 1px 2px 3px #0006; }
.toolbody .flyout button { width: 100%; height: 19px; padding: 0 9px 0 5px; gap: 4px; }
.flyout b { width: 9px; font: 6px/8px "DejaVu Sans", sans-serif; }
.flyout span { flex: 1; text-align: left; white-space: nowrap; }
.flyout kbd { font: inherit; }
.toolbody .swaprow { display: flex; justify-content: space-between; padding: 2px 6px 3px 2px; }
.toolbody .swaprow svg { width: 11px; height: 11px; }
.fgbg { position: relative; height: 31px; margin-left: 3px; }
.fgbg i { position: absolute; width: 20px; height: 20px; border: 1px solid #222; }
.fgbg .fg { left: 0; top: 0; background: #000; border-color: #fff; outline: 1px solid #222; }
.fgbg .bg { left: 10px; top: 10px; background: #fff; }
.viewmodes { padding: 1px 0 0 4px; }
.viewmodes button { margin-bottom: 1px; }

.tabs { display: flex; flex: none; height: 18px; background: #393939; border-bottom: 1px solid #2a2a2a; }
.doc { flex: 1; min-width: 0; display: flex; flex-direction: column; }
.doctabs { height: 19px; }
.doctab { display: flex; justify-content: space-between; width: 172px; padding: 0 6px 0 9px; background: #535353; color: #ccc; line-height: 19px; border-right: 1px solid #2a2a2a; white-space: nowrap; }
.view { flex: 1; min-height: 0; display: grid; grid-template: 17px 1fr 16px / 17px 1fr 16px; }
.corner, .hruler, .vruler { background: #303030; }
.corner { border-right: 1px dotted #666; border-bottom: 1px dotted #666; }
.hruler, .vruler { width: 100%; height: 100%; min-height: 0; overflow: hidden; }
.hruler { border-bottom: 1px solid #6a6a6a; }
.vruler { border-right: 1px solid #6a6a6a; }
.hruler text, .vruler text { fill: #a4a4a4; font: 11px "Noto Sans", sans-serif; }
.hruler path, .vruler path { stroke: #666; fill: none; shape-rendering: crispEdges; }
.stage { display: grid; place-items: center; background: #282828; min-height: 0; }
.canvas { width: 900px; height: 600px; background: #fff; box-shadow: 0 1px 4px #000; }
.vscroll { width: 16px; flex: none; background: linear-gradient(90deg, #343434, #444 60%, #3c3c3c); }
.view .vscroll { grid-column: 3; grid-row: 1 / 3; }
.status { grid-column: 1 / 3; display: flex; background: #3c3c3c; }
.zoomv { width: 48px; padding-left: 9px; background: #424242; color: #fff; }
.sticon { width: 24px; display: flex; justify-content: center; align-items: center; background: #4e4e4e; border-right: 1px solid #333; }
.docinfo { width: 170px; text-align: center; background: #505050; border-right: 1px solid #333; color: #fff; }
.starrow { width: 12px; display: flex; align-items: center; justify-content: center; background: #484848; }
.hscroll { flex: 1; background: linear-gradient(#363636, #444 60%, #3c3c3c); }
.scorner { background: #535353; }

/* icon dock */
.dock { width: 37px; flex: none; display: flex; flex-direction: column; position: relative; }
.dockgroup { background: #535353; border-top: 1px solid #666; border-bottom: 1px solid #2c2c2c; padding-top: 4px; }
.dockgroup button { width: 29px; height: 28px; margin: 0 auto; display: flex; align-items: center; justify-content: center; }
.dockgroup svg { width: 20px; height: 20px; }
.dockgroup:nth-of-type(2) { padding-bottom: 3px; }
.dockgroup .active { height: 25px; margin-top: 3px; background: #383838; border: 1px solid #2e2e2e; border-radius: 3px; }
.dockgroup.last { padding-bottom: 4px; }
.dockfill { flex: 1; background: #535353; border-top: 1px solid #5a5a5a; }

/* panels */
.panels { width: 240px; flex: none; display: flex; flex-direction: column; }
.panel { display: flex; flex-direction: column; }
.tab { padding: 0 7px 0 8px; line-height: 17px; color: #999; border-right: 1px solid #2a2a2a; }
.tab.on { background: #535353; color: #e6e6e6; height: 18px; }
.tabtools { margin-left: auto; display: flex; align-items: center; gap: 4px; padding-right: 4px; }
.tabtools i { width: 3px; height: 12px; border: solid #666; border-width: 0 1px; }
.pbody { flex: 1; display: flex; justify-content: space-between; background: #454545; border-top: 1px solid #666; min-height: 0; }
.colors { height: 208px; }
.swatches { display: grid; grid-template-columns: repeat(18, 11px); grid-auto-rows: 11px; gap: 1px; align-self: flex-start; background: #333; padding-bottom: 1px; }
.foot { height: 19px; flex: none; display: flex; align-items: center; justify-content: flex-end; gap: 15px; background: #535353; border-top: 1px solid #707070; padding-right: 2px; }
.foot .rs { align-self: flex-end; margin-bottom: 1px; }
.dim { color: #858585; }
.lit { color: #ccc; }
.adjust { margin-top: 3px; }
.adjbody { height: 111px; background: #535353; padding: 4px 9px; border-top: 1px solid #666; }
.adjbody p { margin: 0 0 3px; color: #fff; }
.adjrow { display: flex; justify-content: center; gap: 6px; padding-right: 31px; height: 27px; }
.adjrow svg { width: 18px; height: 16px; }
.paths { flex: 1; margin-top: 3px; min-height: 0; }
.paths .foot { gap: 14px; padding-right: 26px; }

/* history panel */
.history { position: absolute; z-index: 5; right: 39px; top: 260px; width: 236px; height: 292px; display: flex; flex-direction: column; padding: 3px 1px 1px; background: #303030; box-shadow: 0 1px 4px #0006; }
.histbody { flex: 1; display: flex; background: #454545; border-top: 1px solid #666; }
.histlist { flex: 1; color: #fff; }
.snap { height: 28px; display: flex; align-items: center; gap: 5px; padding-left: 5px; background: #535353; border-bottom: 1px solid #333; }
.snap i { width: 32px; height: 22px; background: #fff; border: 1px solid #000; }
.state { height: 27px; display: flex; align-items: center; padding-left: 6px; background: #596678; border-top: 3px solid #666; border-bottom: 1px solid #333; gap: 13px; }
.state i { width: 12px; height: 12px; border: 1px solid #7c8796; border-right-color: #333; border-bottom-color: #333; }
.history .foot { gap: 17px; padding-right: 1px; }
.history .tabtools { padding-right: 3px; }
.histgrip { height: 7px; background: #535353; border-top: 1px solid #333; padding-top: 1px; }

.edge { height: 2px; flex: none; background: #14161a; display: flex; justify-content: center; padding-right: 134px; }
.edge i { width: 73px; background: #444; }

/* floating network monitor */
.netball { position: absolute; z-index: 30; right: 18px; top: 46px; width: 170px; height: 57px; display: flex; align-items: center; border-radius: 29px; background: linear-gradient(#fff, #d8d8d8); box-shadow: 0 1px 4px #0008; color: #111; }
.ball { width: 70px; height: 70px; margin: 0 0 4px -18px; flex: none; border-radius: 50%; border: 3px solid #f2f2f2; box-shadow: 0 0 4px #0009, inset 0 0 3px 1px #b04800; background: radial-gradient(ellipse 14px 5px at 50% 9px, #fffc, #fff0), linear-gradient(#b84800, #d87a40 12px, #ff9433 12px, #ff8412); color: #fff3df; font: 22px/62px "Liberation Sans", sans-serif; text-align: center; }
.rates { flex: 1; margin: 0; display: grid; grid-template-columns: 12px 1fr; row-gap: 7px; padding-left: 9px; font-size: 13px; }
.rates dt { display: flex; align-items: center; }
.rates dd { margin: 0; text-align: right; }
.plus { margin: 0 5px 4px 8px; }
```
FILE: app.js
```js
const NS = 'http://www.w3.org/2000/svg';
const CM = 56.7;

function add(parent, tag, attrs, text) {
  const node = document.createElementNS(NS, tag);
  for (const key in attrs) node.setAttribute(key, attrs[key]);
  if (text !== undefined) node.textContent = text;
  parent.appendChild(node);
}

// Both rulers measure in centimetres from the top left corner of the canvas.
function drawRulers() {
  const canvas = document.querySelector('.canvas').getBoundingClientRect();
  const h = document.getElementById('hruler');
  const v = document.getElementById('vruler');
  const hb = h.getBoundingClientRect();
  const vb = v.getBoundingClientRect();
  const draw = (svg, origin, length, horizontal) => {
    svg.replaceChildren();
    let d = '';
    for (let n = -Math.ceil(origin / CM * 10); origin + n * CM / 10 < length; n++) {
      const p = Math.round(origin + n * CM / 10) + 0.5;
      const start = n % 10 === 0 ? 0 : n % 5 === 0 ? 11 : 13;
      d += horizontal ? `M${p} ${start}V17` : `M${start} ${p}H17`;
      if (n % 10 === 0) {
        const label = String(Math.abs(n / 10));
        if (horizontal) add(svg, 'text', { x: p + 3, y: 11 }, label);
        else [...label].forEach((c, i) => add(svg, 'text', { x: 3, y: p + 11 + i * 10 }, c));
      }
    }
    add(svg, 'path', { d });
  };
  draw(h, canvas.left - hb.left, hb.width, true);
  draw(v, canvas.top - vb.top, vb.height, false);
}
drawRulers();
addEventListener('resize', drawRulers);

const swatches = `
ff0000 ffff00 00ff00 00ffff 0000ff ff00ff ffffff ebebeb e1e1e1 d7d7d7 cccccc c2c2c2 b7b7b7 acacac a0a0a0 959595 e60012 f5dc00
00a045 00a0e9 1d2088 e4007f 8a8a8a 7d7d7d 707070 626262 555555 464646 363636 262626 111111 000000 e18e6e e8a572 efc27f f6ee94
cfe29a acd598 89c997 84ccc9 7ecef4 88abda 8c97cb 8f82bc aa89bd c490bf f19ec2 f29b9f ed6941 f19149 f8b551 fff45c b3d465 80c269
32b16c 13b5b1 00b7ee 448aca 556fb5 5f52a0 8957a1 ae5da1 ea68a2 eb6877 e60012 eb6100 f39800 fff100 8fc31f 22ac38 009944 009e96
00a0e9 0068b7 00479d 1d2088 601986 920783 e4007f e5004f a40000 a84200 ac6a00 b7aa00 638c0b 097c25 007130 00736d 0075a9 004986
002e73 100964 440062 6a005f a4005b a40035 7d0000 7f2d00 834e00 8a8000 486a00 005e15 00561f 005752 005982 003567 001c58 03004c
31004a 500047 7e0043 7d0022 cfbca3 a59279 7d6857 5b4a40 362d2b cfa972 b28850 996c33 80511b 683a0a 0ce883 0068b7 000080 0d61a9`;
const grid = document.getElementById('swatches');
for (const hex of swatches.trim().split(/\s+/)) {
  const cell = document.createElement('span');
  cell.style.background = '#' + hex;
  grid.appendChild(cell);
}
```
